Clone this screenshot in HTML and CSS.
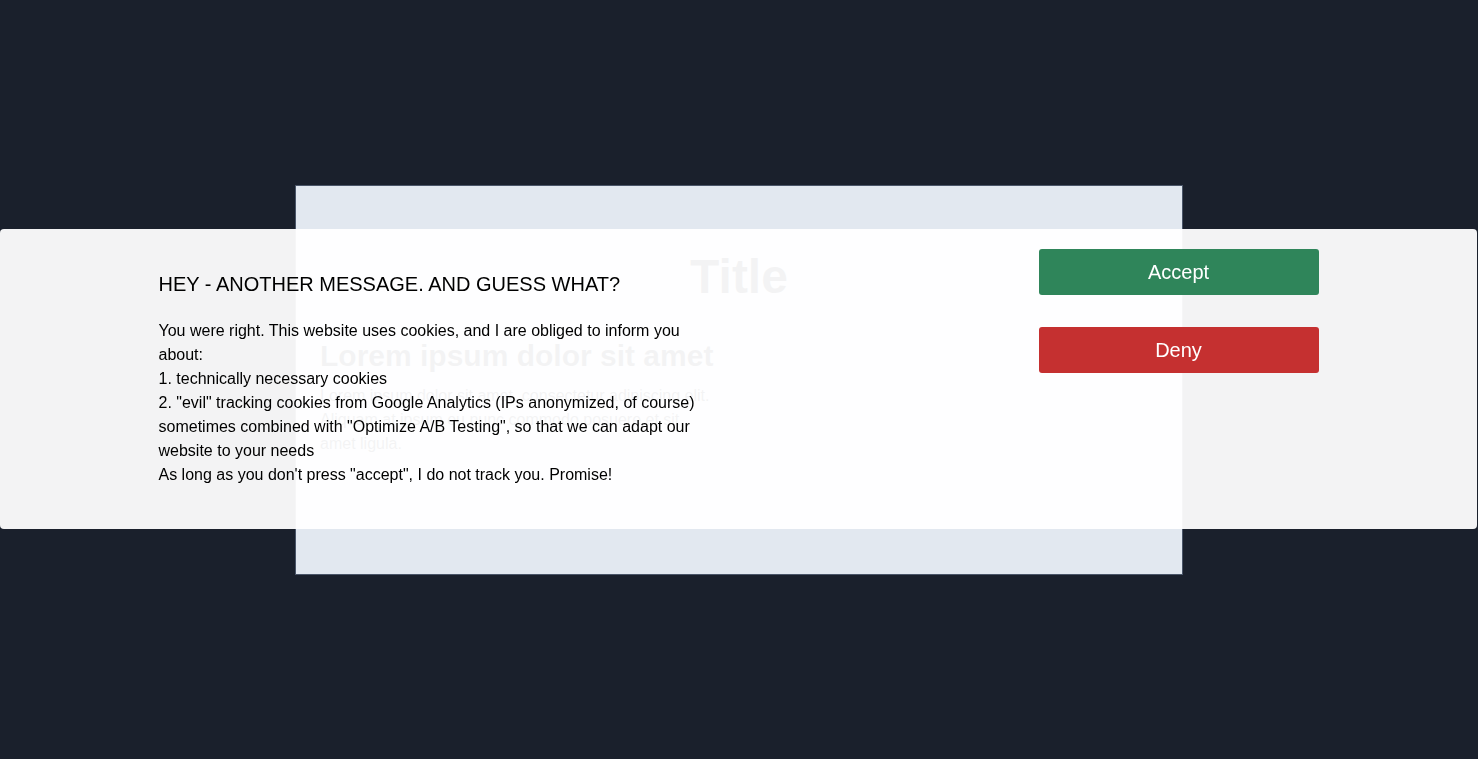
FILE: index.html
```html
<!DOCTYPE html>
<html lang="en">
<head>
<meta charset="utf-8">
<title>Cookie banner</title>
<link rel="stylesheet" href="styles.css">
</head>
<body>
  <main class="card">
    <h1 class="card-title">Title</h1>
    <h2 class="card-subtitle">Lorem ipsum dolor sit amet</h2>
    <p class="card-text">Lorem ipsum dolor sit amet, consectetur adipiscing elit. Aliquam at ipsum eu nunc commodo posuere et sit amet ligula.</p>
  </main>

  <div class="banner">
    <div class="banner-inner">
      <div class="banner-text">
        <h3 class="banner-heading">HEY - ANOTHER MESSAGE. AND GUESS WHAT?</h3>
        <p class="banner-body">You were right. This website uses cookies, and I are obliged to inform you about:<br>1. technically necessary cookies<br>2. "evil" tracking cookies from Google Analytics (IPs anonymized, of course) sometimes combined with "Optimize A/B Testing", so that we can adapt our website to your needs<br>As long as you don't press "accept", I do not track you. Promise!</p>
      </div>
      <div class="banner-actions">
        <button class="btn btn-accept">Accept</button>
        <button class="btn btn-deny">Deny</button>
      </div>
    </div>
  </div>
</body>
</html>
```
FILE: styles.css
```css
html, body {
  margin: 0;
  padding: 0;
}

body {
  background: #1a202c;
  font-family: "Liberation Sans", Arial, sans-serif;
  height: 100vh;
  display: flex;
  align-items: center;
  justify-content: center;
  overflow: hidden;
}

.card {
  box-sizing: border-box;
  width: 888px;
  height: 390px;
  background: #e2e8f0;
  border: 1px solid #4a5568;
  padding: 24px 24px;
  color: #1a202c;
}

.card-title {
  margin: 39px 0 0;
  font-size: 48px;
  font-weight: bold;
  text-align: center;
}

.card-subtitle {
  margin: 35px 0 0;
  font-size: 30px;
  font-weight: bold;
}

.card-text {
  margin: 11px 0 0;
  width: 392px;
  font-size: 16px;
  line-height: 24px;
}

.banner {
  position: fixed;
  top: 229px;
  left: 0;
  right: 1px;
  height: 300px;
  box-sizing: border-box;
  background: rgba(255, 255, 255, 0.95);
  border-radius: 4px;
  padding: 20px 0;
}

.banner-inner {
  width: 1160px;
  margin: 0 auto;
  display: flex;
  justify-content: space-between;
  align-items: flex-start;
}

.banner-text {
  width: 550px;
  padding-top: 24px;
  color: #000;
}

.banner-heading {
  margin: 0;
  font-size: 20px;
  font-weight: normal;
  line-height: 23px;
}

.banner-body {
  margin: 23px 0 0;
  font-size: 16px;
  line-height: 24px;
}

.banner-actions {
  width: 280px;
  display: flex;
  flex-direction: column;
  gap: 32px;
}

.btn {
  display: block;
  width: 100%;
  height: 46px;
  border: 0;
  border-radius: 3px;
  color: #fff;
  font-family: "Liberation Sans", Arial, sans-serif;
  font-size: 20px;
  cursor: pointer;
}

.btn-accept {
  background: #2f855a;
}

.btn-deny {
  background: #c53030;
}
```
